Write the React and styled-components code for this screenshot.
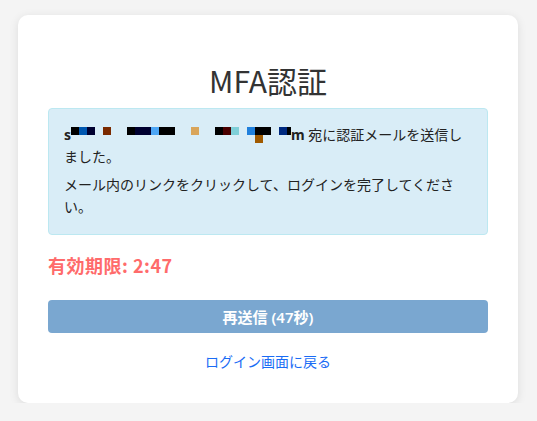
import React from "react";
import styled, { createGlobalStyle } from "styled-components";

const Global = createGlobalStyle`
  html, body { margin: 0; padding: 0; background: #f4f4f4; }
  body { font-family: "Noto Sans", "Noto Sans CJK JP", sans-serif; }
`;

const Page = styled.div`
  padding-top: 15px;
  padding-right: 1px;
  display: flex;
  justify-content: center;
`;

const Card = styled.div`
  width: 500px;
  box-sizing: border-box;
  background: #fff;
  border-radius: 10px;
  box-shadow: 0 2px 10px rgba(0, 0, 0, 0.1);
  padding: 47px 30px 31px;
  display: flex;
  flex-direction: column;
`;

const Title = styled.h2`
  margin: 0 0 10px;
  font-family: "Noto Sans CJK JP", sans-serif;
  font-size: 30px;
  font-weight: 400;
  line-height: 36px;
  color: #333;
  text-align: center;
`;

const Alert = styled.div`
  background: #d9edf7;
  border: 1px solid #bce8f1;
  border-radius: 4px;
  padding: 15px;
  color: #222;
  font-family: "Noto Sans", "Noto Sans CJK JP", sans-serif;
  font-size: 14px;
  line-height: 22.4px;
`;

const Para = styled.p`
  margin: 0 0 ${(p) => (p.$last ? 0 : 5)}px;
`;

const Email = styled.strong`
  font-weight: 700;
`;

const Mosaic = styled.svg`
  vertical-align: -3px;
  display: inline-block;
`;

const Timer = styled.div`
  margin-top: 17px;
  font-family: "Noto Sans CJK JP", sans-serif;
  font-size: 18px;
  font-weight: 700;
  line-height: 27px;
  letter-spacing: 0.5px;
  color: #ff6b6b;
`;

const Button = styled.button`
  margin-top: 21px;
  height: 33px;
  border: none;
  border-radius: 4px;
  background: #7aa7d0;
  color: #fff;
  font-family: "Noto Sans", "Noto Sans CJK JP", sans-serif;
  font-size: 15px;
  font-weight: 600;
  cursor: not-allowed;
`;

const BackLink = styled.a`
  margin-top: 18px;
  align-self: center;
  color: #1a6cf5;
  text-decoration: none;
  font-family: "Noto Sans CJK JP", sans-serif;
  font-size: 14px;
  line-height: 21px;
`;

const blocks = [
  [0, 0, "#000"],
  [8, 0, "#0057b0"],
  [16, 0, "#000030"],
  [32, 0, "#7a2a00"],
  [56, 0, "#000"],
  [64, 0, "#000030"],
  [72, 0, "#000030"],
  [80, 0, "#4da6f5"],
  [88, 0, "#000"],
  [96, 0, "#000"],
  [120, 0, "#d9a55a"],
  [144, 0, "#000"],
  [152, 0, "#4a0000"],
  [160, 0, "#7fcfd8"],
  [176, 0, "#2080dc"],
  [184, 0, "#000"],
  [192, 0, "#000"],
  [184, 8, "#a05a00"],
  [208, 0, "#002a80"],
];

export default function App() {
  return (
    <>
      <Global />
      <Page>
        <Card>
          <Title>MFA認証</Title>
          <Alert>
            <Para>
              <Email>
                s
                <Mosaic width="220" height="16" viewBox="0 0 220 16">
                  {blocks.map(([x, y, c], i) => (
                    <rect key={i} x={x} y={y} width="8" height="8" fill={c} />
                  ))}
                  <rect x="216" y="0" width="4" height="8" fill="#000" />
                </Mosaic>
                m
              </Email>{" "}
              宛に認証メールを送信しました。
            </Para>
            <Para $last>メール内のリンクをクリックして、ログインを完了してください。</Para>
          </Alert>
          <Timer>有効期限: 2:47</Timer>
          <Button disabled>再送信 (47秒)</Button>
          <BackLink href="#">ログイン画面に戻る</BackLink>
        </Card>
      </Page>
    </>
  );
}
